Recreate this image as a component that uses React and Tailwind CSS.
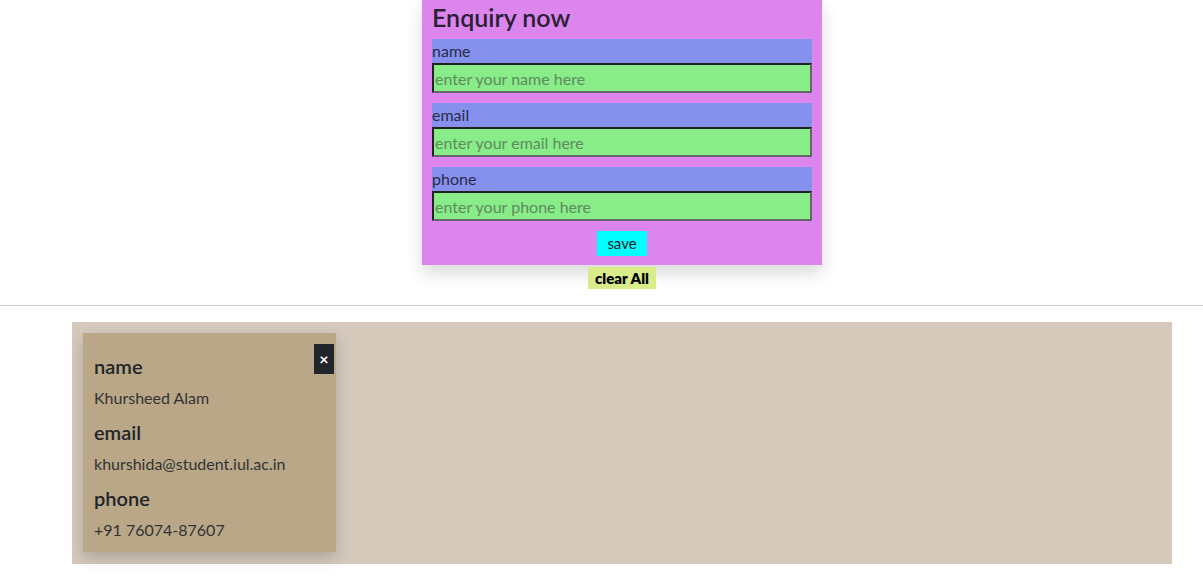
export default function App() {
  const font = { fontFamily: '"Segoe UI", Lato, "Noto Sans", sans-serif' };
  const Field = ({ label, ph }) => (
    <div className="mb-[10px]">
      <div className="bg-[#8591ec] h-[24px] leading-[24px] text-[16px] text-[#2a2a4a]">{label}</div>
      <input
        placeholder={ph}
        className="block w-full h-[30px] bg-[#88ec88] border-2 border-t-[#222] border-l-[#222] border-b-[#666] border-r-[#666] px-[1px] text-[16px] placeholder:text-[#5f8a5f] outline-none"
      />
    </div>
  );
  return (
    <div className="bg-white min-h-[581px] text-[#212529]" style={font}>
      <div className="flex flex-col items-center pl-[41px]">
        <div className="w-[400px] bg-[#dc85ec] px-[10px] pt-[1px] pb-[9px] shadow-[0_8px_16px_rgba(0,0,0,0.15)]">
          <h2 className="text-[25px] leading-[33px] font-semibold text-[#2b1f36] mb-[5px]">Enquiry now</h2>
          <Field label="name" ph="enter your name here" />
          <Field label="email" ph="enter your email here" />
          <Field label="phone" ph="enter your phone here" />
          <div className="flex justify-center">
            <button className="bg-[#00ffff] w-[50px] h-[25px] text-[15px] leading-[25px] text-[#222]">save</button>
          </div>
        </div>
        <button className="mt-[2px] bg-[#d9ec8a] h-[22px] px-[7px] text-[15px] leading-[22px] font-extrabold text-black">clear All</button>
      </div>
      <hr className="mt-[16px] border-t border-[#cccccc]" />
      <div className="ml-[72px] w-[1100px] mt-[16px] bg-[#d5c9bc] p-[11px] h-[242px]">
        <div className="relative w-[253px] bg-[#b9a788] px-[11px] pt-[19px] pb-[10px] shadow-[0_6px_14px_rgba(0,0,0,0.18)]">
          <button className="absolute right-[2px] top-[11px] w-[20px] h-[30px] bg-[#212529] text-white text-[16px] font-bold flex items-center justify-center">×</button>
          <div className="text-[20px] font-semibold leading-[28px]">name</div>
          <div className="text-[16px] leading-[24px] mt-[6px] text-[#333]">Khursheed Alam</div>
          <div className="text-[20px] font-semibold leading-[28px] mt-[8px]">email</div>
          <div className="text-[16px] leading-[24px] mt-[6px] text-[#333]">khurshida@student.iul.ac.in</div>
          <div className="text-[20px] font-semibold leading-[28px] mt-[8px]">phone</div>
          <div className="text-[16px] leading-[24px] mt-[6px] text-[#333]">+91 76074-87607</div>
        </div>
      </div>
    </div>
  );
}
